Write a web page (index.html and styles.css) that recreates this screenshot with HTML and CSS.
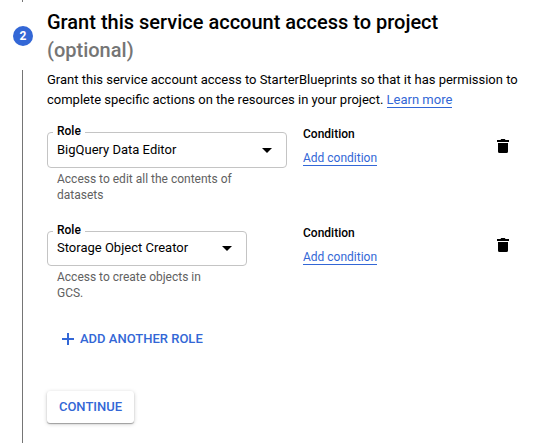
FILE: index.html
```html
<!DOCTYPE html>
<html lang="en">
<head>
<meta charset="utf-8">
<title>Grant access</title>
<link rel="stylesheet" href="styles.css">
</head>
<body>
<main class="step">
  <div class="rail">
    <span class="line line-top"></span>
    <span class="badge">2</span>
    <span class="line line-rest"></span>
  </div>
  <section class="content">
    <h2 class="title">Grant this service account access to project <span class="optional">(optional)</span></h2>
    <p class="desc">Grant this service account access to StarterBlueprints so that it has permission to complete specific actions on the resources in your project. <a class="link">Learn more</a></p>

    <div class="role-row">
      <div class="role">
        <div class="select">
          <span class="label">Role</span>
          <span class="value">BigQuery Data Editor</span>
          <svg class="arrow" width="10" height="5" viewBox="0 0 10 5"><path d="M0 0h10L5 5z"/></svg>
        </div>
        <p class="hint">Access to edit all the contents of datasets</p>
      </div>
      <div class="condition">
        <span class="condition-title">Condition</span>
        <a class="link add-condition">Add condition</a>
      </div>
      <svg class="trash" width="12" height="14" viewBox="0 0 12 14"><path d="M0 1h3.500l.7-1h3.600l.7 1H12v2H0zM1 4h10v8.500a1.500 1.500 0 0 1-1.500 1.500h-7A1.500 1.500 0 0 1 1 12.500z"/></svg>
    </div>

    <div class="role-row second">
      <div class="role">
        <div class="select narrow">
          <span class="label">Role</span>
          <span class="value">Storage Object Creator</span>
          <svg class="arrow" width="10" height="5" viewBox="0 0 10 5"><path d="M0 0h10L5 5z"/></svg>
        </div>
        <p class="hint hint-short">Access to create objects in GCS.</p>
      </div>
      <div class="condition">
        <span class="condition-title">Condition</span>
        <a class="link add-condition">Add condition</a>
      </div>
      <svg class="trash" width="12" height="14" viewBox="0 0 12 14"><path d="M0 1h3.500l.7-1h3.600l.7 1H12v2H0zM1 4h10v8.500a1.500 1.500 0 0 1-1.500 1.500h-7A1.500 1.500 0 0 1 1 12.500z"/></svg>
    </div>

    <button class="add-role"><svg width="12" height="12" viewBox="0 0 12 12"><path d="M5 0h2v5h5v2H7v5H5V7H0V5h5z"/></svg>ADD ANOTHER ROLE</button>
    <button class="continue">CONTINUE</button>
  </section>
</main>
</body>
</html>
```
FILE: styles.css
```css
* { box-sizing: border-box; }

body {
  margin: 0;
  background: #fff;
  color: #000;
  font: 13px/20px Roboto, sans-serif;
  overflow: hidden;
}

h2, p { margin: 0; }

.step {
  display: flex;
  width: 542px;
  height: 443px;
}

.rail {
  display: flex;
  flex-direction: column;
  align-items: center;
  width: 20px;
  margin-left: 13px;
}

.line {
  width: 1px;
  margin-right: 1px;
  background: #757575;
}

.line-top { height: 2px; }

.line-rest { flex: 1; }

.badge {
  width: 20px;
  height: 20px;
  margin: 24px 0;
  border-radius: 50%;
  background: #3367d6;
  color: #fff;
  font-size: 12px;
  font-weight: 700;
  text-align: center;
}

.content {
  width: 480px;
  margin-left: 14px;
  padding-top: 8px;
}

.title {
  width: 420px;
  font-size: 20px;
  font-weight: 500;
  line-height: 28px;
}

.optional {
  display: block;
  color: #757575;
}

.desc { margin-top: 6px; }

.link {
  color: #3367d6;
  border-bottom: 1px solid #3367d6;
}

.role-row {
  display: flex;
  height: 99px;
  margin-top: 22px;
}

.role-row.second { margin-top: 0; }

.role { width: 256px; }

.select {
  position: relative;
  display: flex;
  align-items: center;
  justify-content: space-between;
  width: 240px;
  height: 36px;
  padding: 0 14px 0 9px;
  border: 1px solid #c4c4c4;
  border-radius: 4px;
}

.select.narrow {
  width: 200px;
  height: 35px;
}

.narrow .value { padding-bottom: 2px; }

.label {
  position: absolute;
  left: 5px;
  top: -10px;
  padding: 0 4px;
  background: #fff;
  font-size: 12px;
  font-weight: 500;
  line-height: 16px;
}

.hint {
  width: 206px;
  margin-top: 3px;
  padding-left: 10px;
  color: #616161;
  font-size: 12px;
  line-height: 16px;
}

.hint-short { width: 170px; }

.condition {
  display: flex;
  flex-direction: column;
  align-items: flex-start;
  width: 194px;
  margin-top: -6px;
  font-size: 12px;
  line-height: 16px;
}

.condition-title { font-weight: 500; }

.add-condition {
  margin-top: 9px;
  line-height: 14px;
}

.trash { margin-top: 7px; }

button {
  border: 0;
  background: none;
  color: #3367d6;
  font: 500 13px/20px Roboto, sans-serif;
}

.add-role {
  display: flex;
  align-items: center;
  gap: 6px;
  margin: -1px 0 0 15px;
  padding: 0;
}

.add-role svg { fill: #3367d6; }

.continue {
  display: block;
  width: 87px;
  height: 32px;
  margin-top: 42px;
  padding: 0;
  border-radius: 3px;
  background: #fff;
  box-shadow: 0 1px 1px rgba(0, 0, 0, .3), 0 1px 4px rgba(0, 0, 0, .2);
}
```
